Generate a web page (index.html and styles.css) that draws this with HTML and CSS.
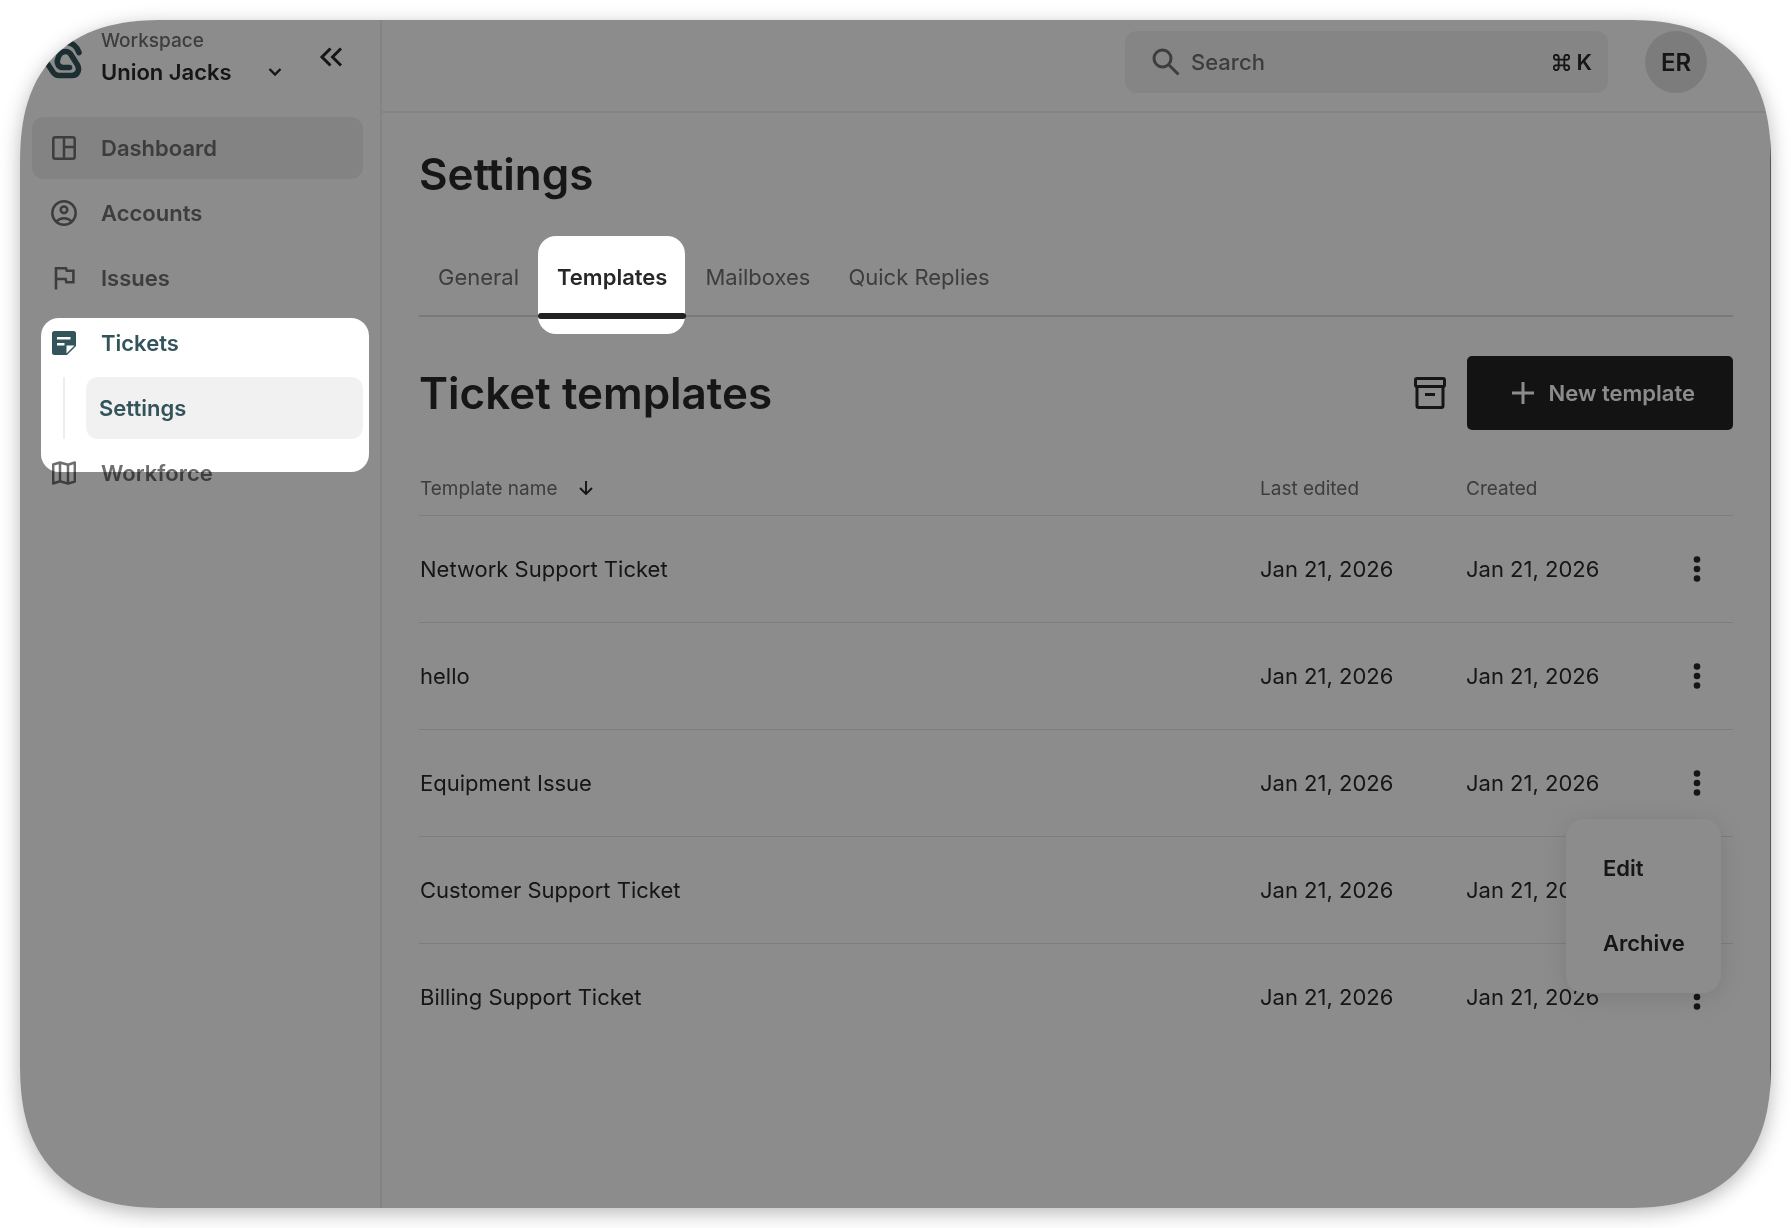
FILE: index.html
```html
<!DOCTYPE html>
<html lang="en">
<head>
  <meta charset="UTF-8">
  <meta name="viewport" content="width=device-width, initial-scale=1.0">
  <title>Settings - Ticket templates</title>
  <link rel="stylesheet" href="styles.css">
</head>
<body>
  <div class="app">
    <aside class="sidebar">
      <div class="workspace">
        <svg class="logo" viewBox="0 0 36 44" fill="none" stroke="currentColor" stroke-width="5.600" stroke-linecap="round" stroke-linejoin="round">
          <path d="M23.500 32.500H17c-4 0-6.500-3.500-5.500-7.500 1-5 4-8.500 8-8.500 3 0 4.700 1.500 6 4l6 9.500c2.500 5 0 10.500-5.500 10.500H13c-2.500 0-4.300-1-5.700-3L1 28"/>
          <path d="M33 17.500C31 12 27.500 8 21 7.500 11 7 4 14 2 22"/>
        </svg>
        <div class="workspace-name">
          <span class="workspace-label">Workspace</span>
          <button class="workspace-select">Union Jacks
            <svg class="chevron" viewBox="0 0 14 10" fill="none" stroke="currentColor" stroke-width="2.400"><path d="M1.500 2l5.500 5.500L12.500 2"/></svg>
          </button>
        </div>
        <button class="collapse" aria-label="Collapse sidebar">
          <svg viewBox="0 0 24 20" fill="none" stroke="currentColor" stroke-width="3"><path d="M11.500 1.500L3 10l8.500 8.500M22 1.500L13.500 10l8.500 8.500"/></svg>
        </button>
      </div>
      <nav class="nav">
        <a class="nav-item current" href="#">
          <svg viewBox="0 0 24 24" fill="none" stroke="currentColor" stroke-width="2.500"><rect x="1.300" y="1.300" width="21.400" height="21.400" rx="2"/><path d="M12 1v22M12 11h11"/></svg>
          Dashboard
        </a>
        <a class="nav-item" href="#">
          <svg class="wide" viewBox="0 0 26 26" fill="none" stroke="currentColor" stroke-width="2.500"><circle cx="13" cy="13" r="11.700"/><circle cx="13" cy="9.800" r="3.300"/><path d="M5.500 21.500c2-2.200 4.500-3.200 7.500-3.200s5.500 1 7.500 3.200"/></svg>
          Accounts
        </a>
        <a class="nav-item" href="#">
          <svg viewBox="0 0 24 24" fill="none" stroke="currentColor" stroke-width="2.600"><path d="M4 23.500V2.200h10l.8 2.600h6.600v11.400h-7l-.8-3.200H4"/></svg>
          Issues
        </a>
        <a class="nav-item active" href="#">
          <svg viewBox="0 0 24 24"><path fill="currentColor" fill-rule="evenodd" d="M2.500 0h19A2.500 2.500 0 0 1 24 2.500V15l-9 9H2.500A2.500 2.500 0 0 1 0 21.500v-19A2.500 2.500 0 0 1 2.500 0zM5 6v2.600h13.500V6zm0 6v2.600h7.500V12zm9.500 10.500l8-8h-8z"/></svg>
          Tickets
        </a>
        <div class="subnav">
          <a class="nav-item subnav-item" href="#">Settings</a>
        </div>
        <a class="nav-item" href="#">
          <svg viewBox="0 0 24 24" fill="none" stroke="currentColor" stroke-width="2.500" stroke-linejoin="round"><path d="M1.200 3.500L8 1.500l8 2.200 6.800-2.200v19L16 22.600l-8-2.400-6.800 2.300zM8 1.500v18.700M16 3.700v18.900"/></svg>
          Workforce
        </a>
      </nav>
    </aside>

    <div class="main">
      <header class="topbar">
        <label class="search">
          <svg class="search-icon" viewBox="0 0 28 28" fill="none" stroke="currentColor" stroke-width="3"><circle cx="10.500" cy="10.500" r="8.500"/><path d="M16.500 16.500L26.500 26.500"/></svg>
          <input type="text" placeholder="Search" aria-label="Search">
          <span class="shortcut">
            <svg viewBox="0 0 18 18" fill="none" stroke="currentColor" stroke-width="2"><path d="M6 6h6v6H6zM6 6H3.800A2.600 2.600 0 1 1 6 3.600zM12 6V3.600A2.600 2.600 0 1 1 14.200 6zM12 12h2.200A2.600 2.600 0 1 1 12 14.400zM6 12v2.400A2.600 2.600 0 1 1 3.800 12z"/></svg>
            K
          </span>
        </label>
        <button class="avatar">ER</button>
      </header>

      <main class="content">
        <h1>Settings</h1>
        <nav class="tabs">
          <a class="tab" href="#">General</a>
          <a class="tab selected" href="#">Templates</a>
          <a class="tab" href="#">Mailboxes</a>
          <a class="tab" href="#">Quick Replies</a>
        </nav>

        <div class="section-head">
          <h2>Ticket templates</h2>
          <button class="archive" aria-label="Archived templates">
            <svg viewBox="0 0 32 32" fill="none" stroke="currentColor" stroke-width="3" stroke-linejoin="round"><rect x="1.500" y="1.500" width="29" height="8" rx="1.500"/><path d="M3 9.500V29a1.500 1.500 0 0 0 1.500 1.500h23A1.500 1.500 0 0 0 29 29V9.500M11 17.500h10"/></svg>
          </button>
          <button class="new-template">
            <svg viewBox="0 0 22 22" fill="none" stroke="currentColor" stroke-width="3"><path d="M11 0v22M0 11h22"/></svg>
            New template
          </button>
        </div>

        <table class="templates">
          <thead>
            <tr>
              <th>Template name <svg class="sort" viewBox="0 0 14 14" fill="none" stroke="currentColor" stroke-width="1.900"><path d="M7 0v12.500M1 7l6 6 6-6"/></svg></th>
              <th class="date">Last edited</th>
              <th class="date">Created</th>
              <th class="actions"></th>
            </tr>
          </thead>
          <tbody>
            <tr>
              <td>Network Support Ticket</td><td>Jan 21, 2026</td><td>Jan 21, 2026</td>
              <td class="actions"><button class="more" aria-label="More"><svg viewBox="0 0 8 26" fill="currentColor"><circle cx="4" cy="3.500" r="3.300"/><circle cx="4" cy="13" r="3.300"/><circle cx="4" cy="22.500" r="3.300"/></svg></button></td>
            </tr>
            <tr>
              <td>hello</td><td>Jan 21, 2026</td><td>Jan 21, 2026</td>
              <td class="actions"><button class="more" aria-label="More"><svg viewBox="0 0 8 26" fill="currentColor"><circle cx="4" cy="3.500" r="3.300"/><circle cx="4" cy="13" r="3.300"/><circle cx="4" cy="22.500" r="3.300"/></svg></button></td>
            </tr>
            <tr>
              <td>Equipment Issue</td><td>Jan 21, 2026</td><td>Jan 21, 2026</td>
              <td class="actions">
                <button class="more" aria-label="More"><svg viewBox="0 0 8 26" fill="currentColor"><circle cx="4" cy="3.500" r="3.300"/><circle cx="4" cy="13" r="3.300"/><circle cx="4" cy="22.500" r="3.300"/></svg></button>
                <div class="menu">
                  <button>Edit</button>
                  <button>Archive</button>
                </div>
              </td>
            </tr>
            <tr>
              <td>Customer Support Ticket</td><td>Jan 21, 2026</td><td>Jan 21, 2026</td>
              <td class="actions"><button class="more" aria-label="More"><svg viewBox="0 0 8 26" fill="currentColor"><circle cx="4" cy="3.500" r="3.300"/><circle cx="4" cy="13" r="3.300"/><circle cx="4" cy="22.500" r="3.300"/></svg></button></td>
            </tr>
            <tr>
              <td>Billing Support Ticket</td><td>Jan 21, 2026</td><td>Jan 21, 2026</td>
              <td class="actions"><button class="more" aria-label="More"><svg viewBox="0 0 8 26" fill="currentColor"><circle cx="4" cy="3.500" r="3.300"/><circle cx="4" cy="13" r="3.300"/><circle cx="4" cy="22.500" r="3.300"/></svg></button></td>
            </tr>
          </tbody>
        </table>
      </main>
    </div>

    <!-- white areas of the dimmer stay at full brightness -->
    <div class="dimmer">
      <div class="spot spot-nav"></div>
      <div class="spot spot-tab"></div>
    </div>
  </div>
</body>
</html>
```
FILE: styles.css
```css
* { box-sizing: border-box; }
body {
  font-family: Inter, 'Liberation Sans', sans-serif;
  font-size: 22px;
  margin: 0;
  padding: 20px;
  background: #fff;
  color: #272727;
}
button {
  font: inherit;
  color: inherit;
  background: none;
  border: none;
  padding: 0;
  cursor: pointer;
}
a { color: inherit; text-decoration: none; }
svg { display: block; flex: none; }

.app {
  position: relative;
  isolation: isolate;
  display: flex;
  min-height: calc(100vh - 40px);
  border-radius: 120px;
  overflow: hidden;
  background: #fff;
  box-shadow: 0 5px 20px rgba(0,0,0,0.28);
}
@supports (corner-shape: superellipse(1.3)) {
  .app { border-radius: 144px; corner-shape: superellipse(1.3); }
}

/* sidebar */
.sidebar {
  width: 362px;
  flex: none;
  border-right: 2px solid #f0f0f0;
}
.workspace {
  display: flex;
  align-items: center;
  height: 97px;
  padding: 0 19px 24px 26px;
}
.logo { width: 36px; height: 44px; color: #32545a; }
.workspace-name { margin-left: 19px; flex: 1; }
.workspace-label {
  display: block;
  font-size: 19px;
  line-height: 30px;
  font-weight: 500;
  color: #6f6f6f;
}
.workspace-select {
  display: flex;
  align-items: center;
  gap: 36px;
  line-height: 32px;
  font-weight: 600;
}
.chevron { width: 14px; height: 10px; }
.collapse { margin-right: 18px; }
.collapse svg { width: 24px; height: 20px; }

.nav {
  display: flex;
  flex-direction: column;
  gap: 3px;
  padding: 0 17px 0 12px;
}
.nav-item {
  display: flex;
  align-items: center;
  gap: 25px;
  height: 62px;
  padding-left: 20px;
  border-radius: 12px;
  font-weight: 600;
  color: #6f6f6f;
}
.nav-item svg { width: 24px; height: 24px; }
.nav-item svg.wide { width: 26px; height: 26px; margin: 0 -1px; }
.nav-item.current { background: #eee; }
.nav-item.active { color: #32545a; }
.subnav {
  margin-left: 31px;
  padding-left: 21px;
  border-left: 2px solid #eee;
}
.subnav-item {
  padding-left: 13px;
  background: #f1f1f1;
  color: #32545a;
}

/* main column */
.main {
  flex: 1;
  min-width: 0;
  display: flex;
  flex-direction: column;
}
.topbar {
  display: flex;
  justify-content: flex-end;
  gap: 37px;
  height: 93px;
  padding: 11px 64px 0 0;
  border-bottom: 2px solid #f0f0f0;
}
.search {
  display: flex;
  align-items: center;
  width: 483px;
  height: 62px;
  padding: 0 16px 0 27px;
  border-radius: 12px;
  background: #f2f2f2;
  color: #6f6f6f;
}
.search-icon { width: 28px; height: 28px; }
.search input {
  flex: 1;
  min-width: 0;
  margin: 0 11px;
  padding: 0;
  border: none;
  outline: none;
  background: none;
  font: inherit;
  font-weight: 500;
}
.search input::placeholder { color: #6f6f6f; }
.shortcut {
  display: flex;
  align-items: center;
  gap: 7px;
  font-weight: 600;
  color: #272727;
}
.shortcut svg { width: 17px; height: 17px; }
.avatar {
  width: 62px;
  height: 62px;
  border-radius: 50%;
  background: #e2e2e2;
  font-size: 24px;
  font-weight: 600;
}

.content {
  flex: 1;
  padding: 33px 37px 0;
  border-right: 1px solid #999;
}
h1, h2 {
  margin: 0;
  font-size: 44px;
  line-height: 56px;
  font-weight: 600;
}
.tabs {
  display: flex;
  margin-top: 33px;
  border-bottom: 2px solid #dcdcdc;
}
.tab {
  position: relative;
  padding: 4px 19px 0;
  line-height: 76px;
  color: #6f6f6f;
}
.tab.selected { font-weight: 600; color: #272727; }
.tab.selected::after {
  content: "";
  position: absolute;
  left: 0;
  right: 0;
  bottom: -4px;
  height: 6px;
  border-radius: 3px;
  background: #222;
}

.section-head {
  display: flex;
  align-items: center;
  gap: 21px;
  margin-top: 39px;
}
.section-head h2 { flex: 1; }
.archive svg { width: 32px; height: 32px; }
.new-template {
  display: flex;
  align-items: center;
  gap: 15px;
  height: 74px;
  padding: 0 38px 0 45px;
  border-radius: 5px;
  background: #222;
  color: #fff;
  font-weight: 600;
}
.new-template svg { width: 22px; height: 22px; }

.templates {
  width: 100%;
  margin-top: 32px;
  border-collapse: collapse;
  table-layout: fixed;
}
th, td { padding: 0 0 0 1px; text-align: left; }
th {
  height: 53px;
  font-size: 19px;
  font-weight: 400;
  color: #6f6f6f;
}
tr { border-bottom: 1px solid #e4e4e4; }
tbody tr:last-child { border-bottom: none; }
td { height: 107px; }
.date { width: 206px; }
.actions { position: relative; }
th.actions { width: 62px; }
.sort { display: inline-block; width: 14px; height: 14px; margin-left: 16px; color: #272727; }
.more { display: block; padding: 0 21px; }
.more svg { width: 8px; height: 26px; }

.menu {
  position: absolute;
  z-index: 1;
  top: 89px;
  right: 12px;
  width: 155px;
  padding: 12px 0;
  border-radius: 18px;
  background: #fff;
  box-shadow: 0 4px 26px rgba(0,0,0,0.12);
}
.menu button {
  display: block;
  width: 100%;
  padding-left: 37px;
  line-height: 75px;
  text-align: left;
  font-weight: 600;
}

/* tour overlay */
.dimmer {
  position: absolute;
  inset: 0;
  z-index: 2;
  background: #8c8c8c;
  mix-blend-mode: multiply;
  pointer-events: none;
}
.spot { position: absolute; background: #fff; border-radius: 18px; }
.spot-nav { left: 21px; top: 298px; width: 328px; height: 154px; }
.spot-tab { left: 518px; top: 216px; width: 147px; height: 98px; }
```
